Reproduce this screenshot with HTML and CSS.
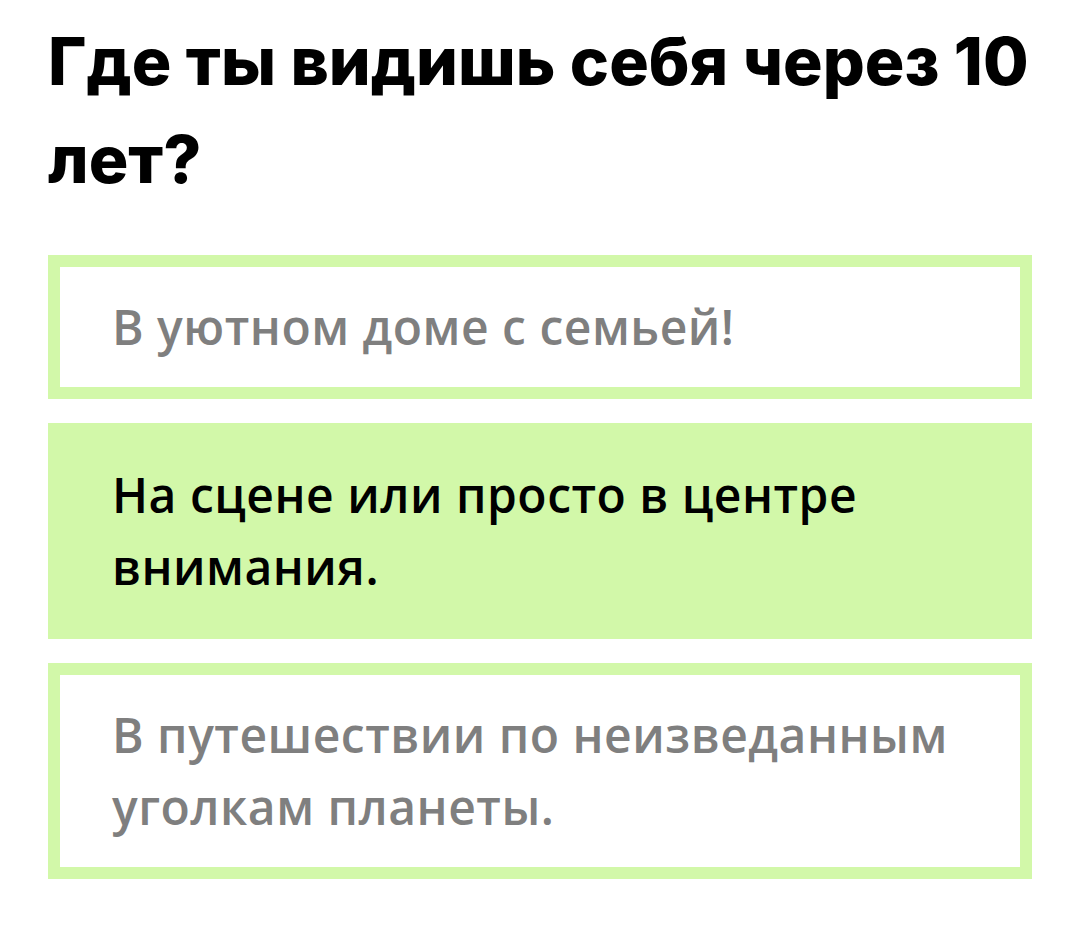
FILE: index.html
```html
<!DOCTYPE html>
<html lang="ru">
<head>
    <meta charset="UTF-8">
    <meta name="viewport" content="width=device-width, initial-scale=1.0">
    <title>Тест</title>
    <link rel="stylesheet" href="styles.css">
</head>
<body>
    <div class="quiz">
        <h1 class="question">Где ты видишь себя через 10 лет?</h1>
        <div class="answers">
            <div class="answer">В уютном доме с семьей!</div>
            <div class="answer selected">На сцене или просто в центре внимания.</div>
            <div class="answer">В путешествии по неизведанным уголкам планеты.</div>
        </div>
    </div>
</body>
</html>
```

FILE: styles.css
```css
body {
    margin: 0;
    background: #fff;
    font-family: "Open Sans", "Noto Sans", sans-serif;
}
.quiz {
    padding: 12px 48px;
}
.question {
    margin: 0;
    font-family: Inter, "Noto Sans", sans-serif;
    font-size: 66px;
    line-height: 98px;
    font-weight: 800;
    color: #000;
}
.answers {
    display: flex;
    flex-direction: column;
    gap: 24px;
    margin-top: 47px;
}
.answer {
    border: 12px solid #d2f8a9;
    padding: 24px 52px;
    font-size: 48px;
    line-height: 72px;
    font-weight: 600;
    letter-spacing: 0.5px;
    color: #7f7f7f;
}
.answer.selected {
    background: #d2f8a9;
    color: #000;
}
```
